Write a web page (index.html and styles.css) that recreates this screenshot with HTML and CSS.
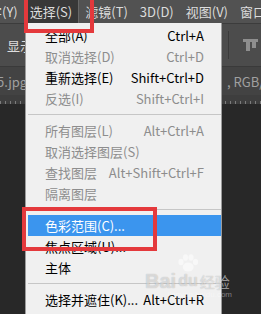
FILE: index.html
```html
<!DOCTYPE html>
<html lang="zh-CN">
<head>
    <meta charset="UTF-8">
    <meta name="viewport" content="width=device-width, initial-scale=1.0">
    <title>选择菜单</title>
    <link rel="stylesheet" href="styles.css">
</head>
<body>
    <div class="screen">
        <div class="menubar">
            <span class="mitem lead">文字(Y)</span>
            <span class="mitem active">选择(S)</span>
            <span class="mitem">滤镜(T)</span>
            <span class="mitem">3D(D)</span>
            <span class="mitem">视图(V)</span>
            <span class="mitem">窗口(W)</span>
        </div>

        <div class="options">
            <span class="opt-label">显示</span>
            <span class="opt-sep"></span>
            <svg class="align-icon" width="15" height="12" viewBox="0 0 15 12">
                <rect x="0" y="0" width="15" height="3" fill="#8e8e8e"/>
                <rect x="3" y="3" width="4" height="9" fill="#8e8e8e"/>
                <rect x="9" y="3" width="4" height="6" fill="#8e8e8e"/>
            </svg>
        </div>

        <div class="tabs">
            <span class="tab-name">5.jpg</span>
            <span class="tab-mode">, RGB/8#) ×</span>
        </div>
        <div class="ruler"></div>
        <div class="canvas"></div>

        <!-- dropdown of 选择 -->
        <div class="dropdown">
            <div class="row"><span>全部(A)</span><span>Ctrl+A</span></div>
            <div class="row off"><span>取消选择(D)</span><span>Ctrl+D</span></div>
            <div class="row"><span>重新选择(E)</span><span>Shift+Ctrl+D</span></div>
            <div class="row off"><span>反选(I)</span><span>Shift+Ctrl+I</span></div>
            <div class="sep"></div>
            <div class="row off"><span>所有图层(L)</span><span>Alt+Ctrl+A</span></div>
            <div class="row off"><span>取消选择图层(S)</span><span></span></div>
            <div class="row off"><span>查找图层</span><span>Alt+Shift+Ctrl+F</span></div>
            <div class="row off"><span>隔离图层</span><span></span></div>
            <div class="sep"></div>
            <div class="row hover"><span>色彩范围(C)...</span><span></span></div>
            <div class="row"><span>焦点区域(U)...</span><span></span></div>
            <div class="row"><span>主体</span><span></span></div>
            <div class="sep"></div>
            <div class="row"><span>选择并遮住(K)...</span><span>Alt+Ctrl+R</span></div>
        </div>

        <!-- red marks drawn over the screenshot -->
        <div class="mark mark-top"></div>
        <div class="mark mark-range"></div>

        <div class="watermark">
            <svg class="paw" width="24" height="18" viewBox="0 0 24 18">
                <ellipse cx="5" cy="8" rx="2.6" ry="3.2"/>
                <ellipse cx="9.5" cy="3.5" rx="2.6" ry="3.2"/>
                <ellipse cx="15" cy="3.5" rx="2.6" ry="3.2"/>
                <ellipse cx="19.5" cy="8" rx="2.6" ry="3.2"/>
                <ellipse cx="12.2" cy="13" rx="5.5" ry="4.5"/>
            </svg>
            <div class="wm-line">
                <span class="wm-bai">Bai</span><span class="wm-du">du</span><span class="wm-jy">经验</span>
            </div>
            <div class="wm-url">jingyan.baidu.com</div>
        </div>
    </div>
</body>
</html>
```

FILE: styles.css
```css
body {
    margin: 0;
    background-color: #282828;
    font-family: "Noto Sans CJK SC", sans-serif;
}

.screen {
    position: relative;
    width: 261px;
    height: 314px;
    overflow: hidden;
    display: flex;
    flex-direction: column;
}

.menubar {
    display: flex;
    height: 23px;
    flex-shrink: 0;
    background-color: #525252;
    color: #dcdcdc;
    font-size: 13px;
    white-space: nowrap;
}

.mitem {
    display: flex;
    align-items: center;
    padding: 0 6px;
}

.mitem.lead {
    margin-left: -30px;
}

.mitem.active {
    background-color: #383838;
    border-right: 1px solid #686868;
}

.options {
    display: grid;
    grid-template-columns: 1fr 1px 15px;
    column-gap: 14px;
    align-items: center;
    height: 42px;
    flex-shrink: 0;
    padding: 0 3px 0 7px;
    background-color: #4c4c4c;
    border-top: 1px solid #3c3c3c;
    border-bottom: 1px solid #3a3a3a;
    color: #dedede;
    font-size: 13px;
    white-space: nowrap;
    overflow: hidden;
}

.opt-sep {
    height: 28px;
    background-color: #3a3a3a;
}

.tabs {
    display: grid;
    grid-template-columns: 227px 1fr;
    align-items: center;
    height: 28px;
    flex-shrink: 0;
    background-color: #434343;
    color: #a0a0a0;
    font-size: 13px;
    white-space: nowrap;
    overflow: hidden;
}

.tab-name {
    margin-left: -3px;
}

.ruler {
    height: 9px;
    flex-shrink: 0;
    background-color: #3e3e3e;
    background-image: repeating-linear-gradient(to right, #7c7c7c 0, #7c7c7c 1px, transparent 1px, transparent 5px);
    background-size: 100% 3px;
    background-position: 0 100%;
    background-repeat: no-repeat;
}

.canvas {
    flex: 1;
    background-color: #282828;
}

.dropdown {
    position: absolute;
    left: 25px;
    top: 23px;
    bottom: 0;
    width: 195px;
    padding-top: 2px;
    background-color: #f0f0f0;
    border-left: 1px solid #9c9c9c;
    border-right: 1px solid #9c9c9c;
    font-size: 13px;
}

.row {
    display: flex;
    justify-content: space-between;
    align-items: center;
    height: 21px;
    margin-left: 2px;
    padding: 0 17px;
    color: #000;
    white-space: nowrap;
}

.row.off {
    color: #8d8d8d;
}

.row.hover {
    background-color: #3b95ee;
    color: #fff;
}

.sep {
    height: 1px;
    margin: 5px 0 5px 2px;
    background-color: #c6c6c6;
}

.mark {
    position: absolute;
    box-sizing: border-box;
    border: 4px solid #e4393c;
}

.mark-top {
    left: 24px;
    top: -4px;
    width: 70px;
    height: 37px;
}

.mark-range {
    left: 22px;
    top: 207px;
    width: 135px;
    height: 44px;
}

.watermark {
    position: absolute;
    left: 145px;
    top: 254px;
    width: 90px;
    color: rgba(255, 255, 255, 0.55);
}

.paw {
    display: block;
    margin-left: 31px;
    fill: rgba(255, 255, 255, 0.5);
}

.wm-line {
    display: flex;
    align-items: center;
    height: 18px;
    font-family: "Liberation Sans", Arial, sans-serif;
    text-shadow: 0 0 1px rgba(0, 0, 0, 0.3);
}

.wm-bai {
    font-size: 20px;
    font-weight: bold;
}

.wm-du {
    font-size: 16px;
    font-weight: bold;
    margin-left: 2px;
}

.wm-jy {
    font-family: "Noto Sans CJK SC", sans-serif;
    font-size: 15px;
    margin-left: 2px;
}

.wm-url {
    font-family: "Liberation Sans", Arial, sans-serif;
    font-size: 8px;
    text-align: right;
    padding-right: 3px;
    color: rgba(255, 255, 255, 0.4);
}
```
